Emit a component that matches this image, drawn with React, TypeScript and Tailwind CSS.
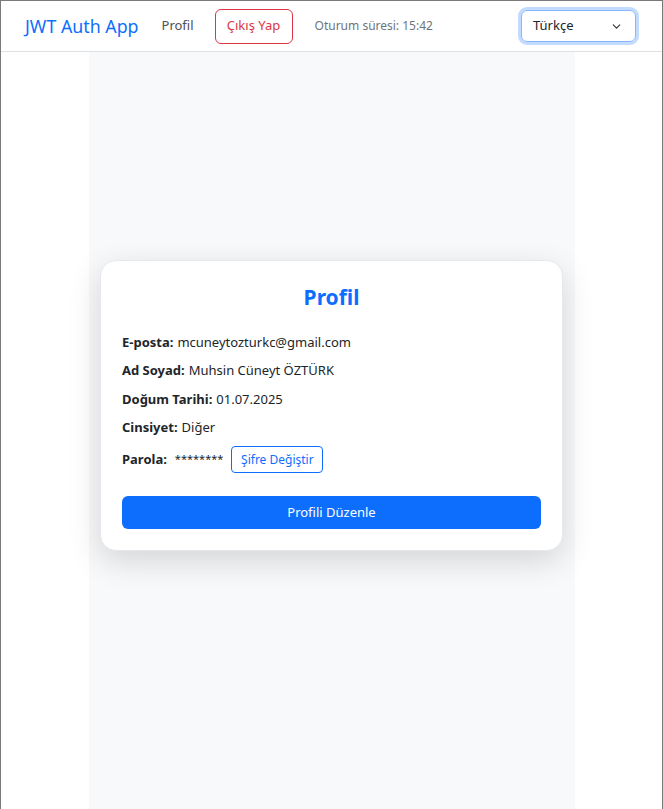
import { ChevronDown } from 'lucide-react'

const font = { fontFamily: '"Noto Sans", "Open Sans", sans-serif' }

function Row({ label, value }: { label: string; value: string }) {
  return (
    <div className="flex h-[28.5px] items-center text-[13px] text-[#212529]">
      <span className="font-bold">{label}</span>
      <span className="ml-[4px]">{value}</span>
    </div>
  )
}

export default function App() {
  return (
    <div
      className="flex h-[809px] flex-col overflow-hidden border-x border-t border-[#7a7a7a] bg-white"
      style={font}
    >
      <nav className="flex h-[51px] shrink-0 items-center border-b border-[#dee2e6] pl-[24px]">
        <span className="text-[17.8px] text-[#0d6efd]">JWT Auth App</span>
        <span className="ml-[23px] text-[13px] text-[#4d5154]">Profil</span>
        <button className="ml-[21px] flex h-[35px] w-[78px] items-center justify-center rounded-[6px] border border-[#dc3545] text-[13px] text-[#dc3545]">
          Çıkış Yap
        </button>
        <span className="ml-[22px] text-[12px] text-[#6c757d]">Oturum süresi: 15:42</span>
        <div className="ml-auto mr-[26px] flex h-[32px] w-[115px] items-center justify-between rounded-[6px] border border-[#86b7fe] pl-[11px] pr-[12px] text-[13px] text-[#212529] shadow-[0_0_0_3px_rgba(13,110,253,0.25)]">
          <span>Türkçe</span>
          <ChevronDown size={13} strokeWidth={2.2} className="text-[#343a40]" />
        </div>
      </nav>
      <main className="flex flex-1 justify-center">
        <div className="w-[486px] bg-[#f8f9fa] pt-[208px]">
          <div className="mx-auto w-[463px] rounded-[16px] border border-[#e6e8eb] bg-white px-[21px] pb-[21px] pt-[21px] shadow-[0_10px_32px_rgba(0,0,0,0.15)]">
            <h2 className="h-[30px] text-center text-[21px] font-bold leading-[30px] text-[#0d6efd]">
              Profil
            </h2>
            <div className="mt-[16px]">
              <Row label="E-posta:" value="mcuneytozturkc@gmail.com" />
              <Row label="Ad Soyad:" value="Muhsin Cüneyt ÖZTÜRK" />
              <Row label="Doğum Tarihi:" value="01.07.2025" />
              <Row label="Cinsiyet:" value="Diğer" />
              <div className="flex h-[35px] items-center text-[13px] text-[#212529]">
                <span className="font-bold">Parola:</span>
                <span className="ml-[8px] text-[11px]">********</span>
                <button className="ml-[8px] flex h-[27px] w-[92px] items-center justify-center rounded-[4px] border border-[#0d6efd] text-[12px] text-[#0d6efd]">
                  Şifre Değiştir
                </button>
              </div>
            </div>
            <button className="mt-[19px] flex h-[33px] w-full items-center justify-center rounded-[6px] bg-[#0d6efd] text-[13px] text-white">
              Profili Düzenle
            </button>
          </div>
        </div>
      </main>
    </div>
  )
}
